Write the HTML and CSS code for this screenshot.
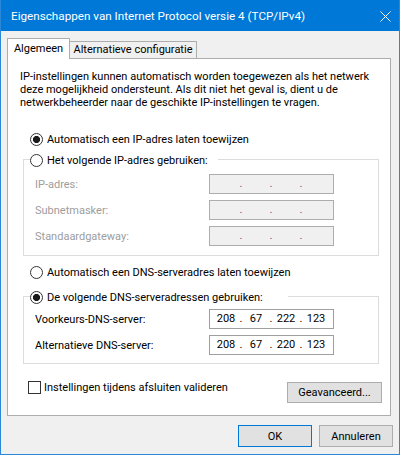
FILE: index.html
```html
<!DOCTYPE html>
<html lang="nl">
<head>
<meta charset="utf-8">
<title>Eigenschappen van Internet Protocol versie 4 (TCP/IPv4)</title>
<link rel="stylesheet" href="styles.css">
</head>
<body>
<div class="window">
  <div class="titlebar">
    <span class="title">Eigenschappen van Internet Protocol versie 4 (TCP/IPv4)</span>
    <svg class="close" width="11" height="11" viewBox="0 0 11 11"><path d="M0.5 0.5 L10.5 10.5 M10.5 0.5 L0.5 10.5" stroke="#fff" stroke-width="1" fill="none"/></svg>
  </div>
  <div class="content">
    <div class="tabs">
      <div class="tab active">Algemeen</div>
      <div class="tab">Alternatieve configuratie</div>
    </div>
    <div class="panel">
      <p class="intro">IP-instellingen kunnen automatisch worden toegewezen als het netwerk<br>deze mogelijkheid ondersteunt. Als dit niet het geval is, dient u de<br>netwerkbeheerder naar de geschikte IP-instellingen te vragen.</p>

      <label class="radio-row first"><input type="radio" name="ip" checked><span>Automatisch een IP-adres laten toewijzen</span></label>

      <fieldset class="group group-ip">
        <legend class="legend legend-ip"><label class="radio-row"><input type="radio" name="ip"><span>Het volgende IP-adres gebruiken:</span></label></legend>
        <div class="field disabled">
          <span class="field-label">IP-adres:</span>
          <div class="ipbox"><span class="oct"></span><span class="dot">.</span><span class="oct"></span><span class="dot">.</span><span class="oct"></span><span class="dot">.</span><span class="oct"></span></div>
        </div>
        <div class="field disabled">
          <span class="field-label">Subnetmasker:</span>
          <div class="ipbox"><span class="oct"></span><span class="dot">.</span><span class="oct"></span><span class="dot">.</span><span class="oct"></span><span class="dot">.</span><span class="oct"></span></div>
        </div>
        <div class="field disabled">
          <span class="field-label">Standaardgateway:</span>
          <div class="ipbox"><span class="oct"></span><span class="dot">.</span><span class="oct"></span><span class="dot">.</span><span class="oct"></span><span class="dot">.</span><span class="oct"></span></div>
        </div>
      </fieldset>

      <label class="radio-row dns-auto"><input type="radio" name="dns"><span>Automatisch een DNS-serveradres laten toewijzen</span></label>

      <fieldset class="group group-dns">
        <legend class="legend legend-dns"><label class="radio-row"><input type="radio" name="dns" checked><span>De volgende DNS-serveradressen gebruiken:</span></label></legend>
        <div class="field">
          <span class="field-label">Voorkeurs-DNS-server:</span>
          <div class="ipbox"><span class="oct">208</span><span class="dot">.</span><span class="oct">67</span><span class="dot">.</span><span class="oct">222</span><span class="dot">.</span><span class="oct">123</span></div>
        </div>
        <div class="field">
          <span class="field-label">Alternatieve DNS-server:</span>
          <div class="ipbox"><span class="oct">208</span><span class="dot">.</span><span class="oct">67</span><span class="dot">.</span><span class="oct">220</span><span class="dot">.</span><span class="oct">123</span></div>
        </div>
      </fieldset>

      <div class="footer-row">
        <label class="check-row"><input type="checkbox"><span>Instellingen tijdens afsluiten valideren</span></label>
        <button class="btn btn-adv" type="button">Geavanceerd...</button>
      </div>
    </div>
    <div class="dialog-buttons">
      <button class="btn btn-main default" type="button">OK</button>
      <button class="btn btn-main" type="button">Annuleren</button>
    </div>
  </div>
</div>
</body>
</html>
```
FILE: styles.css
```css
* {
  box-sizing: border-box;
}

html,
body {
  margin: 0;
  padding: 0;
}

body {
  width: 400px;
  height: 455px;
  font-family: Roboto, "Noto Sans", sans-serif;
  font-size: 11px;
  color: #000;
  background: #f0f0f0;
  overflow: hidden;
}

.window {
  width: 400px;
  height: 455px;
  border: 1px solid #2b88d8;
  border-top: 0;
  background: #f0f0f0;
  display: flex;
  flex-direction: column;
}

.titlebar {
  height: 31px;
  flex: none;
  background: #0078d7;
  color: #fff;
  display: flex;
  align-items: center;
  justify-content: space-between;
  padding: 0 8px 0 10px;
}

.title {
  font-size: 11.7px;
  line-height: 16px;
}

.close {
  display: block;
  margin-top: 1px;
}

.content {
  padding: 7px 8px 0 6px;
}

.tabs {
  display: flex;
  align-items: flex-end;
  height: 20px;
  position: relative;
  z-index: 1;
}

.tab {
  width: 128px;
  height: 17px;
  margin-left: -1px;
  border: 1px solid #adadad;
  border-bottom: 0;
  background: #f0f0f0;
  text-align: center;
  line-height: 16px;
  white-space: nowrap;
}

.tab.active {
  width: 63px;
  height: 21px;
  margin-left: 0;
  margin-bottom: -1px;
  padding-top: 1px;
  background: #fff;
  line-height: 17px;
  position: relative;
  z-index: 2;
}

.panel {
  width: 384px;
  height: 358px;
  background: #fff;
  border: 1px solid #adadad;
  display: flex;
  flex-direction: column;
}

.intro {
  margin: 11px 0 0 12px;
  line-height: 13px;
  white-space: nowrap;
}

.radio-row {
  display: flex;
  align-items: center;
  height: 15px;
  line-height: 15px;
  white-space: nowrap;
}

.radio-row span {
  margin-left: 4px;
}

.radio-row.first {
  margin: 23px 0 0 22px;
}

.radio-row.dns-auto {
  margin: 9px 0 0 22px;
}

input[type="radio"] {
  appearance: none;
  -webkit-appearance: none;
  width: 13px;
  height: 13px;
  margin: 0;
  flex: none;
  border: 1px solid #333;
  border-radius: 50%;
  background: #fff;
}

input[type="radio"]:checked {
  background: radial-gradient(circle at center, #1a1a1a 0, #1a1a1a 3.2px, #fff 3.9px);
}

.group {
  margin: 0 11px 0 15px;
  border: 1px solid #dcdcdc;
  min-width: 0;
}

.group-ip {
  margin-top: 4px;
  padding: 7px 44px 9px 11px;
}

.group-dns {
  margin-top: 8px;
  padding: 5px 44px 8px 11px;
}

.legend {
  height: 16px;
  padding: 2px 0 0 0;
  margin-left: -5px;
  background: #fff;
}

.legend-ip {
  padding-right: 10px;
}

.legend-dns {
  padding-right: 25px;
}

.field {
  display: flex;
  align-items: center;
  justify-content: space-between;
  height: 20px;
}

.field + .field {
  margin-top: 6px;
}

.field-label {
  line-height: 15px;
  white-space: nowrap;
}

.field.disabled .field-label {
  color: #9d9d9d;
}

.ipbox {
  width: 125px;
  height: 20px;
  border: 1px solid #9f9f9f;
  background: #fff;
  display: flex;
  padding-left: 4px;
  line-height: 18px;
}

.field.disabled .ipbox {
  background: #f0f0f0;
  border-color: #adadad;
}

.oct {
  width: 24px;
  text-align: center;
}

.dot {
  width: 6px;
  text-align: center;
}

.field.disabled .dot {
  color: #5a5a7a;
}

.footer-row {
  display: flex;
  justify-content: space-between;
  align-items: flex-start;
  margin: 17px 8px 0 20px;
}

.check-row {
  display: flex;
  align-items: center;
  height: 13px;
  line-height: 13px;
  white-space: nowrap;
}

.check-row span {
  margin-left: 3px;
}

input[type="checkbox"] {
  appearance: none;
  -webkit-appearance: none;
  width: 13px;
  height: 13px;
  margin: 0;
  flex: none;
  border: 1px solid #333;
  background: #fff;
}

.btn {
  font-family: inherit;
  font-size: 11px;
  color: #000;
  background: #e1e1e1;
  border: 1px solid #adadad;
  padding: 0;
  margin: 0;
  line-height: 15px;
}

.btn-adv {
  width: 95px;
  height: 21px;
  margin-top: 1px;
}

.dialog-buttons {
  display: flex;
  justify-content: flex-end;
  gap: 7px;
  margin: 9px -2px 0 0;
}

.btn-main {
  width: 74px;
  height: 22px;
}

.btn.default {
  border-color: #0078d7;
}
```
